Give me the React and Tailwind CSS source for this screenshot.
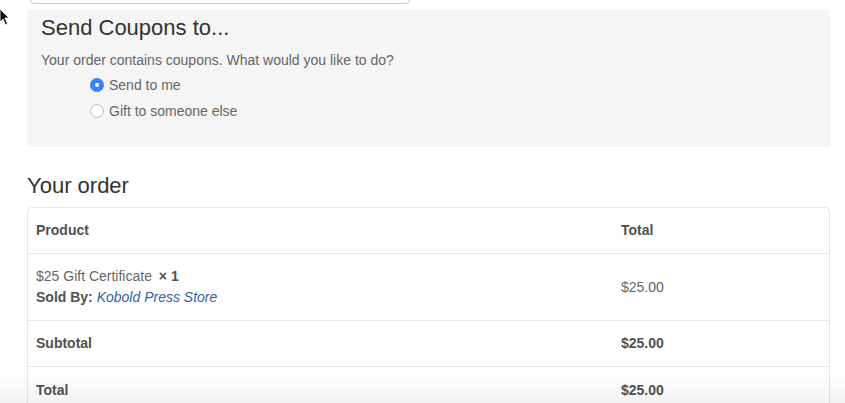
import React from 'react';

export default function App() {
  return (
    <div className="relative h-[403px] w-[845px] overflow-hidden bg-white font-['Liberation_Sans',Arial,sans-serif] text-[#333]">
      {/* cut-off input above */}
      <div className="absolute left-[30px] top-[-20px] h-[24px] w-[380px] rounded-[4px] border border-[#c8c8c8] bg-white" />

      {/* mouse cursor */}
      <svg className="absolute left-0 top-[9px]" width="10" height="17" viewBox="0 0 10 17">
        <path d="M0 0 L0 13 L3 10 L5.5 16 L7.5 15 L5 9 L9 9 Z" fill="#111" stroke="#fff" strokeWidth="0.8" />
      </svg>

      <div className="pl-[27px] pr-[15px] pt-[10px]">
        {/* coupons box */}
        <div className="h-[137px] bg-[#f5f5f5] px-[14px] pt-[4px]">
          <h3 className="text-[22px] leading-[28px] text-[#333]">Send Coupons to...</h3>
          <p className="mt-[9px] text-[14px] leading-[18px] text-[#666]">
            Your order contains coupons. What would you like to do?
          </p>
          <div className="ml-[49px] mt-[7px] flex flex-col gap-[8px] text-[14px] leading-[18px] text-[#666]">
            <label className="flex items-center gap-[5px]">
              <span className="flex h-[14px] w-[14px] items-center justify-center rounded-full bg-[#3b82f6]">
                <span className="h-[4px] w-[4px] rounded-full bg-white" />
              </span>
              Send to me
            </label>
            <label className="flex items-center gap-[5px]">
              <span className="h-[14px] w-[14px] rounded-full border border-[#bdbdbd] bg-white" />
              Gift to someone else
            </label>
          </div>
        </div>

        <h3 className="mt-[26px] text-[22px] leading-[26px] text-[#333]">Your order</h3>

        {/* order table */}
        <div className="mt-[8px] rounded-t-[5px] border border-b-0 border-[#e6e6e6] text-[14px] text-[#666]">
          <div className="flex h-[46px] items-center border-b border-[#e6e6e6] font-bold text-[#515151]">
            <div className="w-[585px] pl-[8px]">Product</div>
            <div className="pl-[8px]">Total</div>
          </div>
          <div className="flex h-[67px] items-center border-b border-[#e6e6e6]">
            <div className="w-[585px] pl-[8px] leading-[21px]">
              <div>
                $25 Gift Certificate <strong className="ml-[3px] text-[#515151]">× 1</strong>
              </div>
              <div>
                <span className="font-bold text-[#515151]">Sold By:</span>{' '}
                <span className="italic text-[#3560a8]">Kobold Press Store</span>
              </div>
            </div>
            <div className="pl-[8px]">$25.00</div>
          </div>
          <div className="flex h-[46px] items-center border-b border-[#e6e6e6] font-bold text-[#515151]">
            <div className="w-[585px] pl-[8px]">Subtotal</div>
            <div className="pl-[8px]">$25.00</div>
          </div>
          <div className="flex h-[46px] items-center font-bold text-[#515151]">
            <div className="w-[585px] pl-[8px]">Total</div>
            <div className="pl-[8px]">$25.00</div>
          </div>
        </div>
      </div>

      {/* bottom fade */}
      <div className="pointer-events-none absolute bottom-0 left-0 h-[30px] w-full bg-gradient-to-b from-transparent to-[#0000000d]" />
    </div>
  );
}
